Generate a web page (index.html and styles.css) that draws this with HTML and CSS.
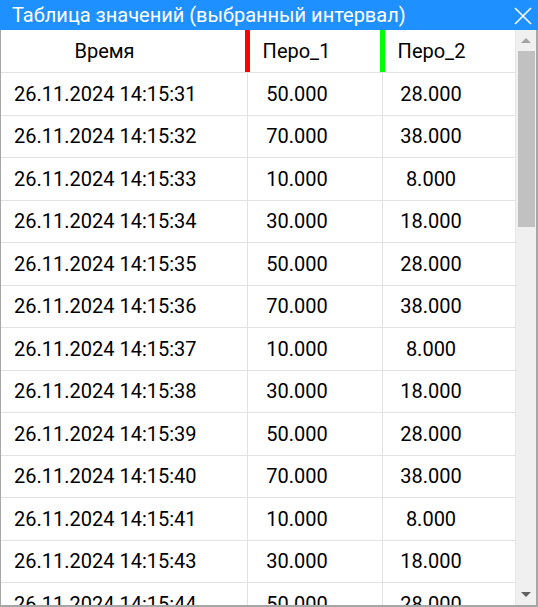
FILE: index.html
```html
<!DOCTYPE html>
<html lang="ru">
<head>
    <meta charset="UTF-8">
    <meta name="viewport" content="width=device-width, initial-scale=1.0">
    <title>Таблица значений</title>
    <link rel="stylesheet" href="styles.css">
</head>
<body>
    <div class="window">
        <div class="titlebar">
            <span class="title">Таблица значений (выбранный интервал)</span>
            <svg class="close" width="18" height="18" viewBox="0 0 18 18">
                <path d="M1 1 L17 17 M17 1 L1 17" stroke="#fff" stroke-width="1.6" fill="none"/>
            </svg>
        </div>
        <div class="content">
            <div class="grid">
                <div class="head">
                    <div class="hcell">Время</div>
                    <div class="hcell pen1">Перо_1</div>
                    <div class="hcell pen2">Перо_2</div>
                </div>
                <div class="rows" id="rows"></div>
            </div>
            <div class="scrollbar">
                <div class="arrow up"></div>
                <div class="track"><div class="thumb"></div></div>
                <div class="arrow down"></div>
            </div>
        </div>
    </div>

    <script>
        // values for the selected interval
        const data = [
            ['26.11.2024 14:15:31', '50.000', '28.000'],
            ['26.11.2024 14:15:32', '70.000', '38.000'],
            ['26.11.2024 14:15:33', '10.000', '8.000'],
            ['26.11.2024 14:15:34', '30.000', '18.000'],
            ['26.11.2024 14:15:35', '50.000', '28.000'],
            ['26.11.2024 14:15:36', '70.000', '38.000'],
            ['26.11.2024 14:15:37', '10.000', '8.000'],
            ['26.11.2024 14:15:38', '30.000', '18.000'],
            ['26.11.2024 14:15:39', '50.000', '28.000'],
            ['26.11.2024 14:15:40', '70.000', '38.000'],
            ['26.11.2024 14:15:41', '10.000', '8.000'],
            ['26.11.2024 14:15:43', '30.000', '18.000'],
            ['26.11.2024 14:15:44', '50.000', '28.000']
        ];

        const rows = document.getElementById('rows');
        data.forEach(function(item) {
            const row = document.createElement('div');
            row.className = 'row';
            item.forEach(function(value, i) {
                const cell = document.createElement('div');
                cell.className = i === 0 ? 'cell time' : 'cell num';
                cell.textContent = value;
                row.appendChild(cell);
            });
            rows.appendChild(row);
        });
    </script>
</body>
</html>
```

FILE: styles.css
```css
html, body {
    margin: 0;
    height: 100%;
    overflow: hidden;
}
body {
    font-family: Roboto, 'Liberation Sans', sans-serif;
    font-size: 20px;
    color: #000;
    background: #fff;
}
.window {
    height: 607px;
    display: flex;
    flex-direction: column;
    box-sizing: border-box;
    border-left: 1px solid #a6a6a6;
    border-right: 2px solid #a6a6a6;
    border-bottom: 2px solid #a6a6a6;
}
.titlebar {
    height: 30px;
    flex: none;
    background: #1e90ff;
    color: #fff;
    display: flex;
    align-items: center;
    justify-content: space-between;
    padding: 0 6px 0 12px;
    margin: 0 -2px 0 -1px;
}
.title {
    font-size: 20px;
    line-height: 30px;
}
.close {
    margin-top: 1px;
}
.content {
    flex: 1;
    display: flex;
    min-height: 0;
}
.grid {
    width: 514px;
    overflow: hidden;
}
.head {
    display: grid;
    grid-template-columns: 244px 135px 135px;
    height: 42px;
    border-bottom: 1px solid #e2e2e2;
}
.hcell {
    display: flex;
    align-items: center;
    justify-content: center;
    padding-right: 37px;
}
.pen1 {
    border-left: 5px solid #ff0000;
}
.pen2 {
    border-left: 5px solid #00ff00;
}
.row {
    display: grid;
    grid-template-columns: 247px 135px 132px;
    height: 42.5px;
    box-sizing: border-box;
    border-bottom: 1px solid #e2e2e2;
}
.cell {
    display: flex;
    align-items: center;
    box-sizing: border-box;
}
.cell.time {
    padding-left: 13px;
    border-right: 1px solid #e2e2e2;
}
.cell.num {
    justify-content: center;
    padding-right: 36px;
}
.row .cell:nth-child(2) {
    border-right: 1px solid #e2e2e2;
}
.scrollbar {
    width: 21px;
    flex: none;
    background: #f0f0f0;
    border-left: 1px solid #e6e6e6;
    box-sizing: border-box;
    display: flex;
    flex-direction: column;
}
.arrow {
    height: 21px;
    flex: none;
    display: flex;
    align-items: center;
    justify-content: center;
}
.arrow::before {
    content: '';
    border-left: 5px solid transparent;
    border-right: 5px solid transparent;
}
.up::before {
    border-bottom: 5px solid #a3a3a3;
}
.down::before {
    border-top: 5px solid #606060;
}
.track {
    flex: 1;
    padding: 0 1px 0 2px;
}
.thumb {
    height: 176px;
    background: #c1c1c1;
}
```
